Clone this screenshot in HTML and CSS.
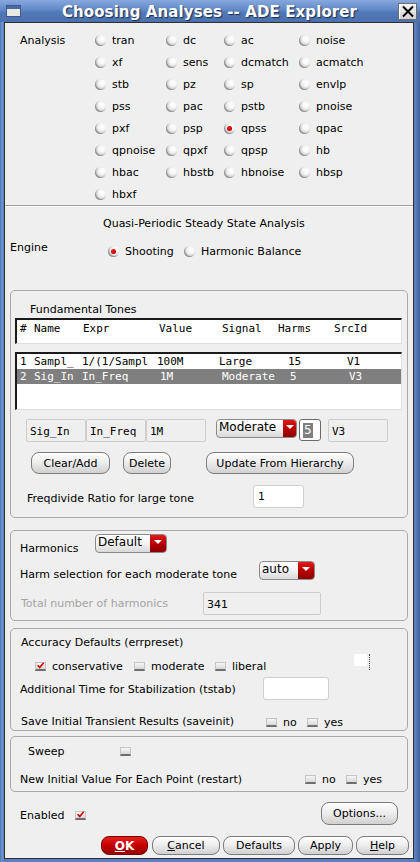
FILE: index.html
```html
<!DOCTYPE html>
<html>
<head>
<meta charset="utf-8">
<title>Choosing Analyses -- ADE Explorer</title>
<link rel="stylesheet" href="styles.css">
</head>
<body>
<div class="window">
  <div class="titlebar">
    <span class="wicon"><span class="wicon-bar"></span></span>
    <span class="title">Choosing Analyses -- ADE Explorer</span>
    <span class="wclose"><svg width="14" height="13" viewBox="0 0 14 13"><path d="M2 1.5 L12 11.5 M12 1.5 L2 11.5" stroke="#000" stroke-width="2" fill="none"/></svg></span>
  </div>
  <div class="client">
    <div class="analysis">
      <div class="an-label">Analysis</div>
      <div class="an-grid">
        <div class="rb"><span class="radio"></span>tran</div>
        <div class="rb"><span class="radio"></span>dc</div>
        <div class="rb"><span class="radio"></span>ac</div>
        <div class="rb"><span class="radio"></span>noise</div>
        <div class="rb"><span class="radio"></span>xf</div>
        <div class="rb"><span class="radio"></span>sens</div>
        <div class="rb"><span class="radio"></span>dcmatch</div>
        <div class="rb"><span class="radio"></span>acmatch</div>
        <div class="rb"><span class="radio"></span>stb</div>
        <div class="rb"><span class="radio"></span>pz</div>
        <div class="rb"><span class="radio"></span>sp</div>
        <div class="rb"><span class="radio"></span>envlp</div>
        <div class="rb"><span class="radio"></span>pss</div>
        <div class="rb"><span class="radio"></span>pac</div>
        <div class="rb"><span class="radio"></span>pstb</div>
        <div class="rb"><span class="radio"></span>pnoise</div>
        <div class="rb"><span class="radio"></span>pxf</div>
        <div class="rb"><span class="radio"></span>psp</div>
        <div class="rb"><span class="radio on"></span>qpss</div>
        <div class="rb"><span class="radio"></span>qpac</div>
        <div class="rb"><span class="radio"></span>qpnoise</div>
        <div class="rb"><span class="radio"></span>qpxf</div>
        <div class="rb"><span class="radio"></span>qpsp</div>
        <div class="rb"><span class="radio"></span>hb</div>
        <div class="rb"><span class="radio"></span>hbac</div>
        <div class="rb"><span class="radio"></span>hbstb</div>
        <div class="rb"><span class="radio"></span>hbnoise</div>
        <div class="rb"><span class="radio"></span>hbsp</div>
        <div class="rb"><span class="radio"></span>hbxf</div>
      </div>
    </div>
    <div class="sep"></div>
    <div class="qpss-title">Quasi-Periodic Steady State Analysis</div>
    <div class="engine">
      <div class="engine-label">Engine</div>
      <div class="rb eng-item first"><span class="radio on"></span>Shooting</div>
      <div class="rb eng-item"><span class="radio"></span>Harmonic Balance</div>
    </div>

    <div class="frame ft">
      <div class="ft-title">Fundamental Tones</div>
      <div class="tbox hdr">
        <div class="hrow"><span>#</span><span>Name</span><span>Expr</span><span>Value</span><span>Signal</span><span>Harms</span><span>SrcId</span></div>
      </div>
      <div class="tbox list">
        <div class="lrow r1"><span>1</span><span>Sampl_</span><span>1/(1/Sampl</span><span>100M</span><span>Large</span><span>15</span><span>V1</span></div>
        <div class="lrow r2 sel"><span>2</span><span>Sig_In</span><span>In_Freq</span><span class="o3">1M</span><span class="o3">Moderate</span><span class="o2">5</span><span class="o2">V3</span></div>
      </div>
      <div class="inrow">
        <div class="cell">Sig_In</div>
        <div class="cell">In_Freq</div>
        <div class="cell">1M</div>
        <div class="dd dd-mod"><span class="dd-text">Moderate</span><span class="dd-btn"><span class="tri"></span></span></div>
        <div class="spin"><span class="spin-sel">5</span></div>
        <div class="cell v3">V3</div>
      </div>
      <div class="btnrow">
        <div class="btn b-clear">Clear/Add</div>
        <div class="btn b-delete">Delete</div>
        <div class="btn b-update">Update From Hierarchy</div>
      </div>
      <div class="fdrow">
        <div class="fd-label">Freqdivide Ratio for large tone</div>
        <div class="input fd-input">1</div>
      </div>
    </div>

    <div class="frame harm">
      <div class="hrow1">
        <div class="h-label l1">Harmonics</div>
        <div class="dd dd-def"><span class="dd-text">Default</span><span class="dd-btn"><span class="tri"></span></span></div>
      </div>
      <div class="hrow2">
        <div class="h-label l2">Harm selection for each moderate tone</div>
        <div class="dd dd-auto"><span class="dd-text">auto</span><span class="dd-btn"><span class="tri"></span></span></div>
      </div>
      <div class="hrow3">
        <div class="h-label l3 gray">Total number of harmonics</div>
        <div class="cell total">341</div>
      </div>
    </div>

    <div class="frame acc">
      <div class="acc-title">Accuracy Defaults (errpreset)</div>
      <div class="acc-checks">
        <div class="cbi w1"><span class="cb on"><svg width="11" height="9" viewBox="0 0 11 9"><path d="M2 4.2 L4.6 7 L9.4 1.2" stroke="#d40000" stroke-width="2" fill="none"/></svg></span>conservative</div>
        <div class="cbi w2"><span class="cb"></span>moderate</div>
        <div class="cbi w3"><span class="cb"></span>liberal</div>
        <div class="mini"><span class="mini-box"></span></div>
      </div>
      <div class="acc-tstab">
        <div class="ts-label">Additional Time for Stabilization (tstab)</div>
        <div class="input ts-input"></div>
      </div>
      <div class="acc-save">
        <div class="sv-label">Save Initial Transient Results (saveinit)</div>
        <div class="cbi w4"><span class="cb"></span>no</div>
        <div class="cbi"><span class="cb"></span>yes</div>
      </div>
    </div>

    <div class="frame sweep">
      <div class="sw-row">
        <div class="sw-label">Sweep</div>
        <span class="cb"></span>
      </div>
      <div class="rs-row">
        <div class="rs-label">New Initial Value For Each Point (restart)</div>
        <div class="cbi w5"><span class="cb"></span>no</div>
        <div class="cbi"><span class="cb"></span>yes</div>
      </div>
    </div>

    <div class="enrow">
      <div class="en-label">Enabled</div>
      <span class="cb on"><svg width="11" height="9" viewBox="0 0 11 9"><path d="M2 4.2 L4.6 7 L9.4 1.2" stroke="#d40000" stroke-width="2" fill="none"/></svg></span>
      <div class="btn b-options">Options...</div>
    </div>

    <div class="bottom">
      <div class="btn b-ok"><span><u>O</u>K</span></div>
      <div class="btn b-cancel"><span><u>C</u>ancel</span></div>
      <div class="btn b-defaults">Defaults</div>
      <div class="btn b-apply">Apply</div>
      <div class="btn b-help"><span><u>H</u>elp</span></div>
    </div>
  </div>
</div>
</body>
</html>
```
FILE: styles.css
```css
* { box-sizing: border-box; }
html, body { margin: 0; padding: 0; }
body {
  width: 420px;
  height: 862px;
  overflow: hidden;
  font-family: "DejaVu Sans", Verdana, sans-serif;
  font-size: 11px;
  color: #000;
  background: #5a7fbe;
}
.window {
  width: 420px;
  height: 862px;
  display: flex;
  flex-direction: column;
  padding-bottom: 3px;
  background: linear-gradient(to right, #4f74b3 0, #7096d2 2px, #5a80bf 4px, #5a80bf 415px, #4a6eab 418px, #3f5f98 420px);
}
.titlebar {
  height: 22px;
  flex: none;
  display: flex;
  align-items: center;
  background: linear-gradient(#86a8dd, #6288c6 45%, #5178b7 55%, #4c71ae);
}
.wicon {
  width: 15px;
  height: 12px;
  margin-left: 6px;
  margin-top: -1px;
  border: 1px solid #3d5a8c;
  background: #e9e9e2;
  display: flex;
  flex-direction: column;
}
.wicon-bar { height: 3px; background: #4a6aa6; }
.title {
  flex: 1;
  text-align: center;
  color: #fff;
  font-weight: bold;
  font-size: 15px;
  letter-spacing: 0.1px;
  text-shadow: 1px 1px 1px #1b2c4f;
  margin-top: 1px;
}
.wclose {
  width: 19px;
  height: 17px;
  margin-right: 3px;
  border: 1px solid #6d6d6d;
  background: linear-gradient(#f4f4f4, #d2d2d2);
  box-shadow: inset 1px 1px 0 #fff;
  display: flex;
  align-items: center;
  justify-content: center;
}
.client {
  flex: 1;
  margin: 0 6px 0 4px;
  border: 1px solid #2e2e2e;
  background: #efefef;
  display: flex;
  flex-direction: column;
}

/* radios */
.rb { display: flex; align-items: center; gap: 6px; white-space: nowrap; }
.radio {
  width: 11px;
  height: 11px;
  border-radius: 50%;
  flex: none;
  position: relative;
  background: radial-gradient(circle at 64% 36%, #ffffff 0, #f6f6f6 32%, #d2d2d2 62%, #8e8e8e 100%);
  box-shadow: inset 1px -1px 1px rgba(0, 0, 0, 0.28);
}
.radio.on::after {
  content: "";
  position: absolute;
  left: 3px;
  top: 3px;
  width: 5px;
  height: 5px;
  border-radius: 50%;
  background: radial-gradient(circle at 40% 40%, #ff2020, #c80000 60%, #7a0000);
}

/* analysis */
.analysis { display: flex; padding: 6px 0 0 15px; height: 182px; flex: none; }
.an-label { width: 75px; height: 22px; line-height: 24px; }
.an-grid {
  display: grid;
  grid-template-columns: 71px 58px 75px 80px;
  grid-auto-rows: 22px;
}
.sep { height: 2px; border-top: 1px solid #a2a2a2; border-bottom: 1px solid #ffffff; flex: none; }
.qpss-title { margin-top: 9px; height: 16px; line-height: 16px; padding-left: 98px; flex: none; }
.engine { margin-top: 7px; height: 20px; display: flex; align-items: flex-start; padding-left: 5px; flex: none; }
.engine-label { width: 98px; line-height: 14px; margin-top: 2px; }
.eng-item { margin-top: 5px; height: 14px; }
.eng-item.first { width: 76px; }

/* frames */
.frame {
  margin-left: 5px;
  margin-right: 5px;
  border: 1px solid #a9a9a9;
  border-radius: 5px;
  flex: none;
}
.ft { margin-top: 31px; padding: 12px 0 9px 0; }
.ft-title { height: 14px; line-height: 14px; padding-left: 19px; }
.tbox {
  margin-left: 4px;
  width: 387px;
  background: #fff;
  border-top: 2px solid #1b1b1b;
  border-left: 2px solid #1b1b1b;
  border-right: 1px solid #dedede;
  border-bottom: 1px solid #dedede;
  font-family: "DejaVu Sans Mono", "Liberation Mono", monospace;
  font-size: 11px;
}
.hdr { margin-top: 1px; height: 26px; padding: 2px 0 0 3px; }
.hrow { display: grid; grid-template-columns: 14px 49px 76px 63px 56px 56px auto; line-height: 14px; white-space: pre; }
.list { margin-top: 8px; height: 58px; padding-top: 1px; }
.lrow { display: grid; grid-template-columns: 14px 48px 75px 62px 69px 59px auto; padding-left: 3px; white-space: pre; }
.lrow.r1 { height: 14px; line-height: 14px; }
.lrow.r2 { height: 15px; line-height: 16px; }
.lrow.sel { background: #7f7f7f; color: #fff; }
.o3 { padding-left: 3px; }
.o2 { padding-left: 2px; }

.inrow { margin-top: 9px; height: 23px; display: flex; align-items: flex-start; padding-left: 15px; }
.cell {
  width: 60px;
  height: 23px;
  border: 1px solid #cdcdcd;
  border-radius: 2px;
  background: #efefef;
  font-family: "DejaVu Sans Mono", "Liberation Mono", monospace;
  padding: 5px 0 0 3px;
  line-height: 14px;
  white-space: pre;
}
.cell.v3 { margin-left: 7px; }
.dd {
  display: flex;
  height: 19px;
  border: 1px solid #8a8a8a;
  border-radius: 4px;
  background: linear-gradient(#ffffff, #f2f2f2 50%, #d9d9d9);
  overflow: hidden;
}
.dd-text { flex: 1; padding-left: 2px; line-height: 15px; font-size: 12px; }
.dd-btn {
  width: 16px;
  background: linear-gradient(#e01a1a, #b80000 50%, #8e0000);
  display: flex;
  align-items: center;
  justify-content: center;
}
.tri { width: 0; height: 0; border-left: 4px solid transparent; border-right: 4px solid transparent; border-top: 4px solid #fff; margin-top: -3px; }
.dd-mod { width: 81px; margin-left: 10px; }
.dd-mod .dd-btn { width: 13px; }
.spin {
  width: 22px;
  height: 22px;
  margin-left: 2px;
  background: #fff;
  border: 1px solid #6a6a6a;
  border-radius: 3px;
  padding: 3px 0 0 3px;
}
.spin-sel { display: inline-block; background: #7f7f7f; color: #fff; font-size: 12px; line-height: 15px; padding: 0 1px; }

.btnrow { margin-top: 10px; height: 22px; display: flex; padding-left: 20px; }
.btn {
  height: 22px;
  border: 1px solid #7c7c7c;
  border-radius: 8px;
  background: linear-gradient(#fefefe, #ececec 50%, #d0d0d0);
  display: flex;
  align-items: center;
  justify-content: center;
  white-space: nowrap;
  flex: none;
}
.b-clear { width: 79px; }
.b-delete { width: 48px; margin-left: 13px; }
.b-update { width: 148px; margin-left: 35px; }

.fdrow { margin-top: 11px; height: 23px; display: flex; align-items: center; padding-left: 16px; }
.fd-label { width: 226px; padding-top: 3px; }
.input {
  height: 23px;
  background: #fff;
  border: 1px solid #cfcfcf;
  border-radius: 3px;
  padding: 4px 0 0 4px;
  line-height: 14px;
}
.fd-input { width: 51px; }

.harm { margin-top: 12px; padding: 3px 0 5px 9px; }
.hrow1, .hrow2, .hrow3 { display: flex; align-items: flex-start; }
.hrow1 { height: 19px; }
.hrow2 { height: 19px; margin-top: 8px; }
.hrow3 { height: 23px; margin-top: 12px; }
.h-label { line-height: 14px; white-space: nowrap; }
.l1 { width: 75px; padding-top: 8px; }
.l2 { width: 239px; padding-top: 7px; }
.l3 { width: 183px; padding-top: 5px; padding-left: 1px; }
.gray { color: #a3a3a3; }
.dd-def { width: 72px; }
.dd-auto { width: 56px; }
.cell.total { width: 118px; font-family: "DejaVu Sans", Verdana, sans-serif; padding-top: 5px; }

.acc { margin-top: 7px; padding: 7px 0 1px 0; }
.acc-title { height: 14px; line-height: 14px; padding-left: 10px; }
.acc-checks { margin-top: 4px; height: 22px; display: flex; align-items: flex-start; padding-left: 24px; }
.cbi { display: flex; align-items: center; gap: 6px; height: 14px; white-space: nowrap; }
.acc-checks .cbi { margin-top: 5px; }
.w1 { width: 99px; }
.w2 { width: 81px; }
.w3 { width: 139px; }
.cb {
  width: 11px;
  height: 9px;
  flex: none;
  background: linear-gradient(#f6f6f6, #d8d8d8);
  border: 1px solid #c4c4c4;
  border-bottom: 2px solid #6e6e6e;
  display: flex;
  align-items: center;
  justify-content: center;
}
.mini { height: 16px; width: 16px; border-right: 1px dotted #444; }
.mini-box { display: block; width: 13px; height: 12px; background: #fff; border-radius: 1px; }
.acc-tstab { margin-top: 1px; height: 23px; display: flex; align-items: center; padding-left: 9px; }
.ts-label { width: 243px; padding-top: 1px; }
.ts-input { width: 66px; }
.acc-save { margin-top: 15px; height: 14px; display: flex; align-items: center; padding-left: 10px; }
.sv-label { width: 245px; line-height: 14px; }
.w4 { width: 41px; }

.sweep { margin-top: 5px; padding: 7px 0 5px 0; }
.sw-row { height: 14px; display: flex; align-items: center; padding-left: 17px; }
.sw-label { width: 92px; }
.rs-row { margin-top: 14px; height: 14px; display: flex; align-items: center; padding-left: 9px; }
.rs-label { width: 285px; }
.w5 { width: 41px; }

.enrow { margin-top: 10px; height: 23px; display: flex; align-items: center; padding-left: 15px; padding-right: 15px; flex: none; }
.en-label { width: 55px; padding-top: 3px; }
.enrow .cb { margin-top: 3px; }
.b-options { width: 77px; height: 23px; margin-left: auto; }

.bottom { margin-top: 11px; height: 19px; display: flex; justify-content: flex-end; padding-right: 4px; flex: none; }
.bottom .btn { height: 19px; border-radius: 8px; }
.b-ok {
  width: 47px;
  background: linear-gradient(#e82020, #c40000 50%, #980000);
  border-color: #7a0000;
  color: #fff;
  font-weight: bold;
  font-size: 12px;
}
.b-cancel { width: 68px; margin-left: 4px; }
.b-defaults { width: 72px; margin-left: 3px; }
.b-apply { width: 55px; margin-left: 3px; }
.b-help { width: 53px; margin-left: 3px; }
```
